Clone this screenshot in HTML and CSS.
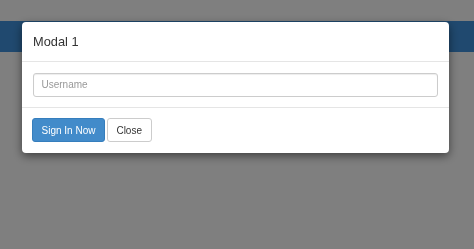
FILE: index.html
```html
<!DOCTYPE html>
<html>
<head>
<meta charset="utf-8">
<link rel="stylesheet" href="styles.css">
</head>
<body>
<div class="page">
  <div class="navbar"></div>
</div>
<div class="backdrop"></div>
<div class="modal-wrap">
  <div class="modal">
    <div class="modal-header">
      <h4 class="modal-title">Modal 1</h4>
    </div>
    <div class="modal-body">
      <input class="form-control" type="text" placeholder="Username">
    </div>
    <div class="modal-footer">
      <button class="btn btn-primary">Sign In Now</button>
      <button class="btn btn-default">Close</button>
    </div>
  </div>
</div>
</body>
</html>
```
FILE: styles.css
```css
html, body {
  margin: 0;
  height: 100%;
  background: #ffffff;
  font-family: "Liberation Sans", Arial, sans-serif;
}
.page {
  padding-top: 21px;
}
.navbar {
  height: 31px;
  background: #4193de;
}
.backdrop {
  position: fixed;
  inset: 0;
  background: rgba(0, 0, 0, 0.5);
}
.modal-wrap {
  position: fixed;
  inset: 0;
  padding: 22px 25px 0 22px;
}
.modal {
  width: 427px;
  background: #fff;
  border-radius: 4px;
  box-shadow: 0 3px 10px rgba(0, 0, 0, 0.5);
  display: flex;
  flex-direction: column;
}
.modal-header {
  padding: 10.5px 11px;
  border-bottom: 1px solid #e5e5e5;
}
.modal-title {
  margin: 0;
  font-size: 12.8px;
  font-weight: normal;
  line-height: 18px;
  color: #333;
}
.modal-body {
  padding: 10.5px 11px 10px 10.5px;
  display: flex;
}
.form-control {
  flex: 1;
  box-sizing: border-box;
  height: 24px;
  margin: 0;
  padding: 3px 8px;
  font-family: inherit;
  font-size: 10px;
  color: #555;
  border: 1px solid #ccc;
  border-radius: 3px;
  box-shadow: inset 0 1px 1px rgba(0, 0, 0, 0.075);
  outline: none;
}
.form-control::placeholder {
  color: #999;
}
.modal-footer {
  border-top: 1px solid #e5e5e5;
  padding: 10.5px 10px 10.5px 10px;
  display: flex;
  gap: 2px;
}
.btn {
  box-sizing: border-box;
  height: 24px;
  margin: 0;
  padding: 0 8.5px;
  font-family: inherit;
  font-size: 10px;
  border: 1px solid transparent;
  border-radius: 3px;
  cursor: pointer;
}
.btn-primary {
  background: #428bca;
  border-color: #357ebd;
  color: #fff;
}
.btn-default {
  background: #fff;
  border-color: #ccc;
  color: #333;
}
```
